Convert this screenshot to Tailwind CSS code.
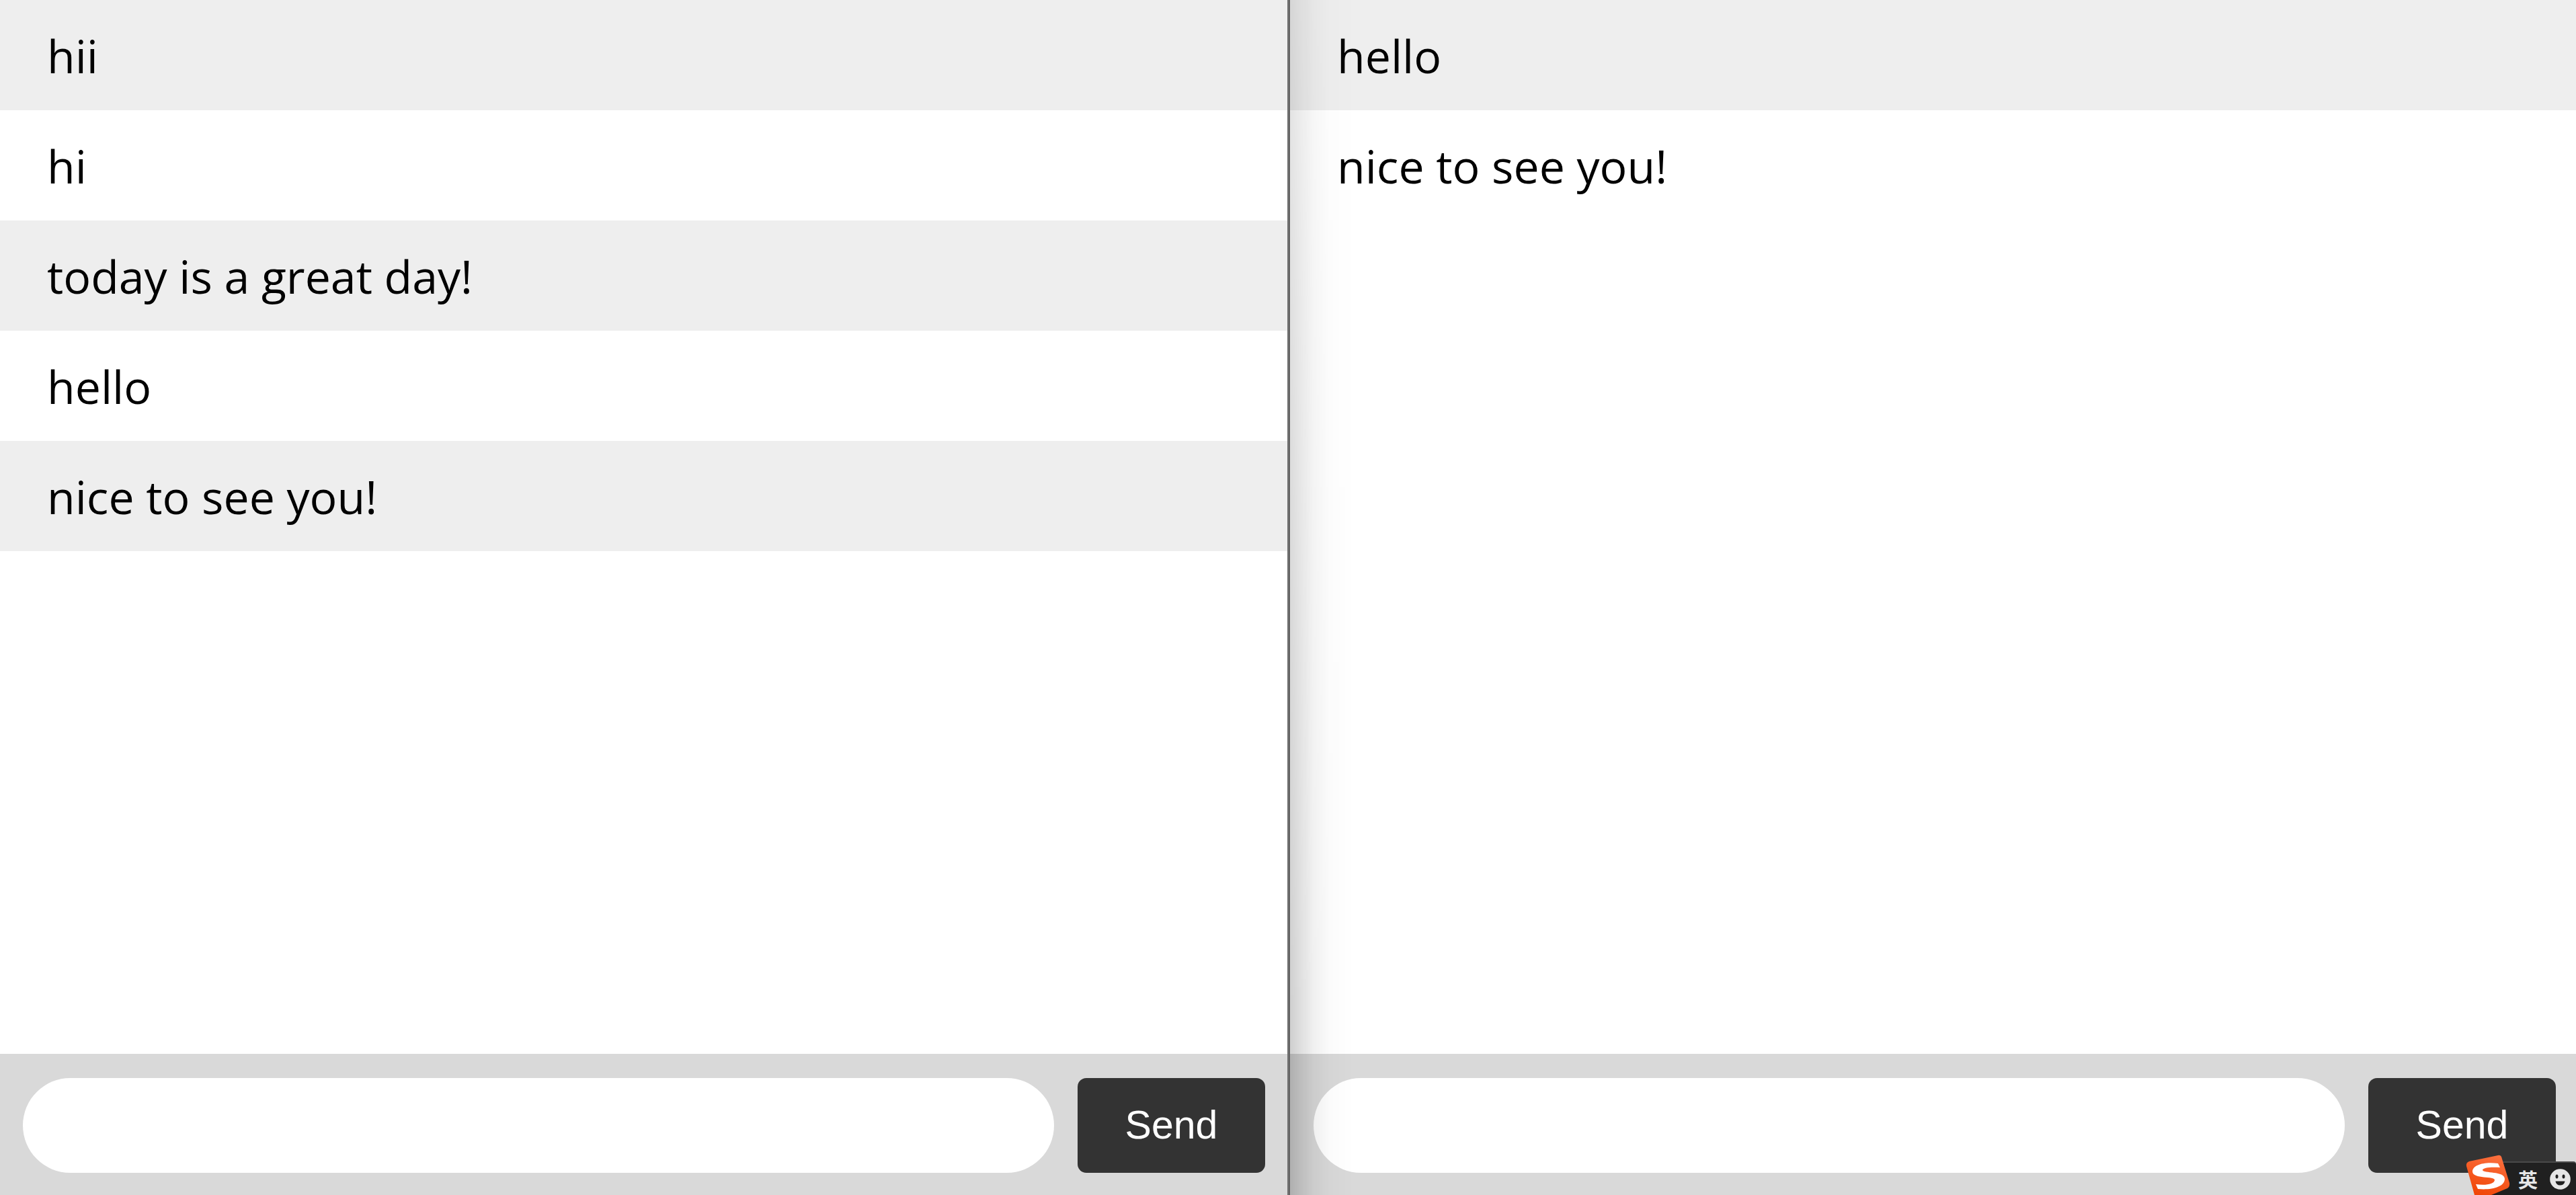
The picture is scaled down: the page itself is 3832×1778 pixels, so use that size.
<!DOCTYPE html>
<html lang="en">
<head>
<meta charset="utf-8">
<title>Chat</title>
<script src="https://cdn.jsdelivr.net/npm/@tailwindcss/browser@4"></script>
</head>
<body class="relative flex h-screen overflow-hidden bg-white font-['Open_Sans','Noto_Sans',sans-serif] text-black">
  <main class="flex w-[calc(50%-1px)] flex-none flex-col">
    <ul class="flex-1 text-[68px] leading-[92px]">
      <li class="bg-[#eeeeee] px-[70px] pt-[37px] pb-[35px]">hii</li>
      <li class="px-[70px] pt-[37px] pb-[35px]">hi</li>
      <li class="bg-[#eeeeee] px-[70px] pt-[37px] pb-[35px]">today is a great day!</li>
      <li class="px-[70px] pt-[37px] pb-[35px]">hello</li>
      <li class="bg-[#eeeeee] px-[70px] pt-[37px] pb-[35px]">nice to see you!</li>
    </ul>
    <form class="flex gap-[35px] bg-[#d9d9d9] pt-[36px] pr-[33px] pb-[33px] pl-[34px]">
      <input type="text" aria-label="Message" class="h-[141px] min-w-0 flex-1 rounded-full bg-white px-[35px] text-[58px] outline-none">
      <button type="button" class="w-[279px] rounded-[13px] bg-[#333333] font-['Liberation_Sans',sans-serif] text-[59px] text-white">Send</button>
    </form>
  </main>
  <div class="w-1 flex-none border-r-2 border-[#626262] bg-[#737373]"></div>
  <section class="relative flex min-w-0 flex-1 flex-col">
    <ul class="flex-1 text-[68px] leading-[92px]">
      <li class="bg-[#eeeeee] px-[70px] pt-[37px] pb-[35px]">hello</li>
      <li class="px-[70px] pt-[37px] pb-[35px]">nice to see you!</li>
    </ul>
    <form class="flex gap-[35px] bg-[#d9d9d9] pt-[36px] pr-[30px] pb-[33px] pl-[35px]">
      <input type="text" aria-label="Message" class="h-[141px] min-w-0 flex-1 rounded-full bg-white px-[35px] text-[58px] outline-none">
      <button type="button" class="w-[279px] rounded-[13px] bg-[#333333] font-['Liberation_Sans',sans-serif] text-[59px] text-white">Send</button>
    </form>
    <!-- Shadow beside the divider, deeper towards the bottom -->
    <div class="pointer-events-none absolute inset-y-0 left-0 w-[96px] bg-[linear-gradient(to_right,rgb(0_0_0/0.19),rgb(0_0_0/0.06)_36%,rgb(0_0_0/0.015)_62%,transparent)] [mask-image:linear-gradient(to_bottom,rgb(0_0_0/0.52),black_85%)]"></div>
  </section>
  <!-- Input method toolbar -->
  <div class="absolute right-0 bottom-0 flex h-[50px] w-[150px] items-center justify-end gap-[18px] rounded-t-[4px] border-t-2 border-[#4a4a4a] bg-[#202020] pr-[8px]">
    <svg class="absolute bottom-0 left-[-14px] h-[60px] w-[66px]" viewBox="0 0 66 60" aria-hidden="true">
      <defs><linearGradient id="o" x1="0.7" y1="0" x2="0.3" y2="1"><stop offset="0" stop-color="#fb6f3e"/><stop offset="1" stop-color="#f04606"/></linearGradient></defs>
      <path d="M5 10 L48 1 Q51 0 53 3 L65 42 Q66 47 62 50 L38 60 H13 L1 17 Q0 12 5 10 Z" fill="url(#o)"/>
      <path d="M48 13 C28 10 10 15 10 25 C10 37 44 31 43 38 C42 44 30 46 15 44 L18 51 C38 53 58 48 58 36 C58 24 26 28 25 23 C25 19 38 18 51 19 Z" fill="#fff"/>
    </svg>
    <span class="font-['Noto_Sans_CJK_SC',sans-serif] text-[29px] leading-[40px] font-bold text-[#e6e6e6]">英</span>
    <svg class="h-[31px] w-[31px]" viewBox="0 0 31 31" aria-hidden="true">
      <circle cx="15.500" cy="15.500" r="15.300" fill="#e6e6e6"/>
      <ellipse cx="10.500" cy="11.500" rx="2" ry="3" fill="#202020"/><ellipse cx="20.500" cy="11.500" rx="2" ry="3" fill="#202020"/>
      <path d="M8.500 18.500 H22.500 Q21.500 24.500 15.500 24.500 Q9.500 24.500 8.500 18.500 Z" fill="#202020"/>
    </svg>
  </div>
</body>
</html>
